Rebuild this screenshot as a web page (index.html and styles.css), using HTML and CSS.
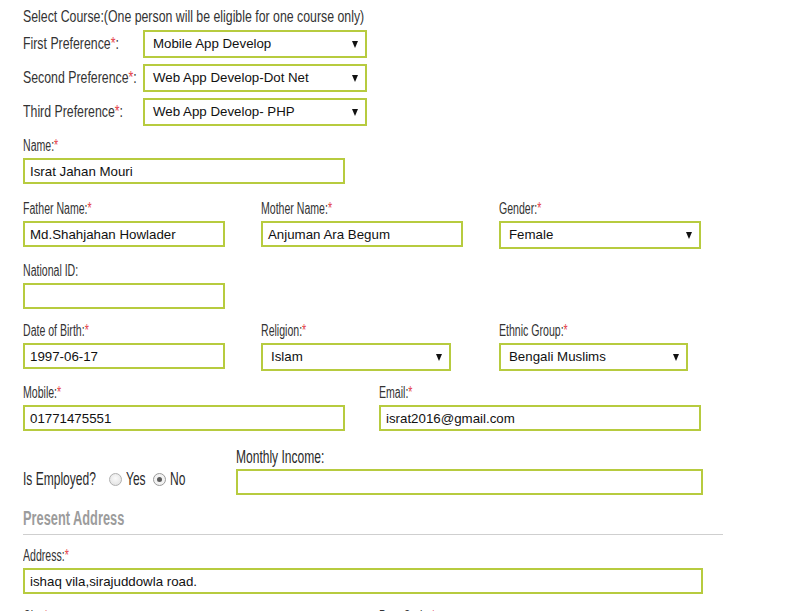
FILE: index.html
```html
<!DOCTYPE html>
<html>
<head>
<meta charset="utf-8">
<link rel="stylesheet" href="styles.css">
</head>
<body>
<form class="form">
  <div class="course">
    <div class="lbl title"><span class="t">Select Course:(One person will be eligible for one course only)</span></div>
    <div class="pref">
      <div class="lbl pref-lbl"><span class="t">First Preference<span class="req">*</span>:</span></div>
      <div class="sel w224"><span>Mobile App Develop</span><i class="arrow"></i></div>
    </div>
    <div class="pref">
      <div class="lbl pref-lbl"><span class="t">Second Preference<span class="req">*</span>:</span></div>
      <div class="sel w224"><span>Web App Develop-Dot Net</span><i class="arrow"></i></div>
    </div>
    <div class="pref">
      <div class="lbl pref-lbl"><span class="t">Third Preference<span class="req">*</span>:</span></div>
      <div class="sel w224"><span>Web App Develop- PHP</span><i class="arrow"></i></div>
    </div>
  </div>

  <div class="row r-name">
    <div class="field">
      <div class="lbl"><span class="t">Name:<span class="req">*</span></span></div>
      <div class="inp w322">Israt Jahan Mouri</div>
    </div>
  </div>

  <div class="row three r-father">
    <div class="field">
      <div class="lbl"><span class="t">Father Name:<span class="req">*</span></span></div>
      <div class="inp w202">Md.Shahjahan Howlader</div>
    </div>
    <div class="field">
      <div class="lbl"><span class="t">Mother Name:<span class="req">*</span></span></div>
      <div class="inp w202">Anjuman Ara Begum</div>
    </div>
    <div class="field">
      <div class="lbl"><span class="t">Gender:<span class="req">*</span></span></div>
      <div class="sel w202"><span>Female</span><i class="arrow"></i></div>
    </div>
  </div>

  <div class="row r-nid">
    <div class="field">
      <div class="lbl"><span class="t">National ID:</span></div>
      <div class="inp w202"></div>
    </div>
  </div>

  <div class="row three r-dob">
    <div class="field">
      <div class="lbl"><span class="t">Date of Birth:<span class="req">*</span></span></div>
      <div class="inp w202">1997-06-17</div>
    </div>
    <div class="field">
      <div class="lbl"><span class="t">Religion:<span class="req">*</span></span></div>
      <div class="sel w190"><span>Islam</span><i class="arrow"></i></div>
    </div>
    <div class="field">
      <div class="lbl"><span class="t">Ethnic Group:<span class="req">*</span></span></div>
      <div class="sel w189"><span>Bengali Muslims</span><i class="arrow"></i></div>
    </div>
  </div>

  <div class="row two r-mobile">
    <div class="field">
      <div class="lbl"><span class="t">Mobile:<span class="req">*</span></span></div>
      <div class="inp w322">01771475551</div>
    </div>
    <div class="field">
      <div class="lbl"><span class="t">Email:<span class="req">*</span></span></div>
      <div class="inp w322">israt2016@gmail.com</div>
    </div>
  </div>

  <div class="row r-emp">
    <div class="emp">
      <span class="lbl big emp-lbl"><span class="t">Is Employed?</span></span>
      <span class="radio"></span><span class="lbl big opt-yes"><span class="t">Yes</span></span>
      <span class="radio on"></span><span class="lbl big"><span class="t">No</span></span>
    </div>
    <div class="field">
      <div class="lbl big"><span class="t">Monthly Income:</span></div>
      <div class="inp w467"></div>
    </div>
  </div>

  <div class="section">
    <h3 class="heading"><span class="t">Present Address</span></h3>
  </div>

  <div class="row r-addr">
    <div class="field">
      <div class="lbl"><span class="t">Address:<span class="req">*</span></span></div>
      <div class="inp w680">ishaq vila,sirajuddowla road.</div>
    </div>
  </div>

  <div class="row two r-city">
    <div class="field">
      <div class="lbl"><span class="t">City:<span class="req">*</span></span></div>
    </div>
    <div class="field">
      <div class="lbl"><span class="t">Post Code:<span class="req">*</span></span></div>
    </div>
  </div>
</form>
</body>
</html>
```

FILE: styles.css
```css
* { box-sizing: border-box; }
html, body { margin: 0; padding: 0; background: #fff; }
body { font-family: "Liberation Sans", Arial, sans-serif; color: #111; }

.form { padding: 7px 0 0 23px; width: 723px; }

.lbl {
  font-family: "Liberation Sans", Arial, sans-serif;
  font-size: 16px;
  line-height: 20px;
  height: 20px;
  color: #333;
  white-space: nowrap;
}
.lbl .t { display: inline-block; transform: scaleX(0.66); transform-origin: left center; }
.title, .pref-lbl { font-size: 17px; }
.title .t, .pref-lbl .t { transform: scaleX(0.725); }
.lbl.big { font-size: 18.5px; color: #2a2a2a; }
.lbl.big .t { transform: scaleX(0.65); }
.req { color: #e4424a; }

.title { margin-bottom: 3px; }

.pref { display: flex; align-items: center; height: 28px; margin-bottom: 6px; }
.pref:last-child { margin-bottom: 0; }
.pref-lbl { width: 120px; }

.inp, .sel {
  border: 2px solid #b7cb3f;
  height: 26px;
  font-size: 13.3px;
  line-height: 23px;
  padding: 0 4px 0 5px;
  color: #111;
  white-space: nowrap;
  overflow: hidden;
  background: #fff;
}
.sel {
  height: 28px;
  line-height: 24px;
  padding: 0 7px 0 8px;
  display: flex;
  align-items: center;
  justify-content: space-between;
}
.arrow {
  width: 0; height: 0;
  border-left: 3.5px solid transparent;
  border-right: 3.5px solid transparent;
  border-top: 7px solid #111;
}
.w224 { width: 224px; }
.w322 { width: 322px; }
.w202 { width: 202px; }
.w190 { width: 190px; }
.w189 { width: 189px; }
.w467 { width: 467px; }
.w680 { width: 680px; }

.field .lbl { margin-bottom: 2px; }

.row { display: flex; }
.three { display: grid; grid-template-columns: 238px 238px 202px; }
.two { display: grid; grid-template-columns: 356px 322px; }

.r-name { margin-top: 10px; }
.r-father { margin-top: 15px; }
.r-nid { margin-top: 12px; }
.r-dob { margin-top: 12px; }
.r-mobile { margin-top: 12px; }
.r-emp { margin-top: 16px; align-items: flex-end; }

.emp { width: 213px; display: flex; align-items: center; height: 24px; margin-bottom: 4px; }
.emp-lbl { width: 86px; }
.opt-yes { width: 27px; }
.radio {
  flex: none;
  width: 13px; height: 13px; border-radius: 50%;
  border: 1px solid #b0b0b0;
  background: radial-gradient(circle at 50% 40%, #fafafa, #dedede);
  margin-right: 4px;
  position: relative;
}
.radio.on { background: #f2f2f2; border-color: #9a9a9a; }
.radio.on::after {
  content: ""; position: absolute; left: 3px; top: 3px;
  width: 5px; height: 5px; border-radius: 50%; background: #5a5a5a;
}

.section { margin-top: 11px; width: 700px; border-bottom: 1px solid #cfcfcf; padding-bottom: 4px; }
.heading {
  margin: 0;
  font-family: "Liberation Sans", Arial, sans-serif;
  font-weight: bold;
  font-size: 20px;
  line-height: 24px;
  color: #9c9c9c;
}
.heading .t { display: inline-block; transform: scaleX(0.64); transform-origin: left center; }

.r-addr { margin-top: 11px; }
.r-city { margin-top: 13px; }
```
